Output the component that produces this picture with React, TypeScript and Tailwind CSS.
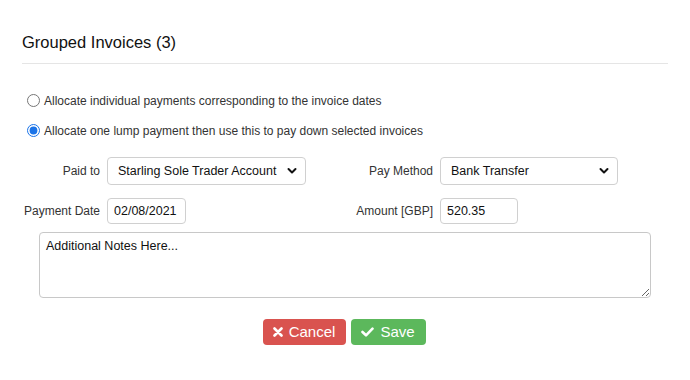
import { useState } from "react";

function Chevron() {
  return (
    <svg
      className="pointer-events-none absolute right-[9px] top-1/2 -translate-y-1/2"
      width="10"
      height="7"
      viewBox="0 0 10 7"
      fill="none"
    >
      <path d="M1.5 1.5 L5 5 L8.5 1.5" stroke="#111" strokeWidth="2" strokeLinecap="round" strokeLinejoin="round" />
    </svg>
  );
}

function Select({ value, width }: { value: string; width: string }) {
  return (
    <div className={`relative ${width}`}>
      <select
        defaultValue={value}
        className="h-[28px] w-full appearance-none rounded-[4px] border border-[#d0d0d0] bg-white pl-[10px] pr-6 text-[12.5px] text-[#111] outline-none"
      >
        <option>{value}</option>
      </select>
      <Chevron />
    </div>
  );
}

function Field({ label, children }: { label: string; children: React.ReactNode }) {
  return (
    <div className="flex items-center gap-[7px]">
      <label className="w-[78px] whitespace-nowrap text-right text-[12px] text-[#333]">{label}</label>
      {children}
    </div>
  );
}

export default function App() {
  const [mode, setMode] = useState("lump");

  return (
    <div className="h-[380px] w-[690px] bg-white px-[22px] pt-[32px] font-['Liberation_Sans',Arial,sans-serif] text-[#222]">
      <h1 className="text-[16.5px] leading-[20px] text-[#111]">Grouped Invoices (3)</h1>
      <div className="mt-[11px] h-px bg-[#e5e5e5]" />

      <div className="mt-[28px] flex flex-col gap-[13px] pl-[5px]">
        {[
          { id: "individual", text: "Allocate individual payments corresponding to the invoice dates" },
          { id: "lump", text: "Allocate one lump payment then use this to pay down selected invoices" },
        ].map((o) => (
          <label key={o.id} className="flex h-[17px] items-center gap-[4px] text-[12px] text-[#333]">
            <input
              type="radio"
              name="mode"
              checked={mode === o.id}
              onChange={() => setMode(o.id)}
              className="m-0 h-[13px] w-[13px] accent-[#1a73e8]"
            />
            {o.text}
          </label>
        ))}
      </div>

      <div className="mt-[18px] grid grid-cols-[333px_1fr] gap-y-[13px]">
        <Field label="Paid to">
          <Select value="Starling Sole Trader Account" width="w-[199px]" />
        </Field>
        <Field label="Pay Method">
          <Select value="Bank Transfer" width="w-[178px]" />
        </Field>
        <Field label="Payment Date">
          <input
            defaultValue="02/08/2021"
            className="h-[26px] w-[79px] rounded-[4px] border border-[#d0d0d0] px-[6px] text-[12.5px] text-[#111] outline-none"
          />
        </Field>
        <Field label="Amount [GBP]">
          <input
            defaultValue="520.35"
            className="h-[26px] w-[78px] rounded-[4px] border border-[#d0d0d0] px-[6px] text-[12.5px] text-[#111] outline-none"
          />
        </Field>
      </div>

      <div className="mt-[8px] pl-[17px] pr-[17px]">
        <textarea
          placeholder="Additional Notes Here..."
          className="block h-[66px] w-full rounded-[4px] border border-[#c8c8c8] px-[6px] py-[4px] text-[12.5px] text-[#111] outline-none placeholder:text-[#111]"
        />
      </div>

      <div className="mt-[21px] flex justify-center gap-[5px] pr-[2px]">
        <button className="flex h-[26px] w-[83px] items-center justify-center gap-[6px] rounded-[4px] bg-[#d9534f] text-[15px] text-white">
          <svg width="10" height="10" viewBox="0 0 10 10">
            <path d="M1.5 1.5 L8.5 8.5 M8.5 1.5 L1.5 8.5" stroke="white" strokeWidth="2.6" strokeLinecap="round" />
          </svg>
          Cancel
        </button>
        <button className="flex h-[26px] w-[75px] items-center justify-center gap-[6px] rounded-[4px] bg-[#5cb85c] text-[15px] text-white">
          <svg width="13" height="10" viewBox="0 0 13 10">
            <path d="M1.5 5 L5 8.3 L11.5 1.7" stroke="white" strokeWidth="2.6" fill="none" strokeLinecap="round" strokeLinejoin="round" />
          </svg>
          Save
        </button>
      </div>
    </div>
  );
}
